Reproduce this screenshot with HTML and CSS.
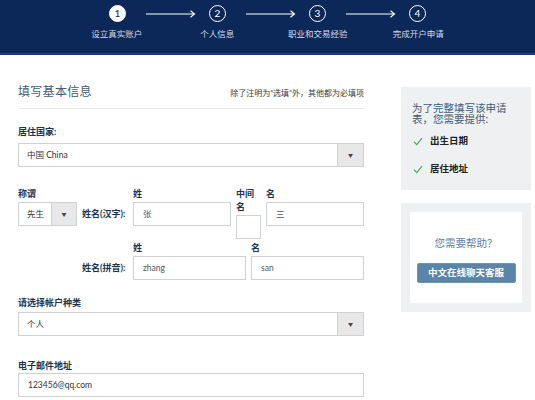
FILE: index.html
```html
<!DOCTYPE html>
<html lang="zh-CN">
<head>
<meta charset="utf-8">
<title>设立真实账户</title>
<link rel="stylesheet" href="styles.css">
</head>
<body>
<header class="topbar">
  <div class="steps">
    <span class="circle active">1</span>
    <svg class="arrow" width="50" height="10" viewBox="0 0 50 10"><path d="M0 5H48M44.5 1.8L48.5 5L44.5 8.2"/></svg>
    <span class="circle">2</span>
    <svg class="arrow" width="50" height="10" viewBox="0 0 50 10"><path d="M0 5H48M44.5 1.8L48.5 5L44.5 8.2"/></svg>
    <span class="circle">3</span>
    <svg class="arrow" width="50" height="10" viewBox="0 0 50 10"><path d="M0 5H48M44.5 1.8L48.5 5L44.5 8.2"/></svg>
    <span class="circle">4</span>
  </div>
  <div class="step-labels">
    <span>设立真实账户</span>
    <span>个人信息</span>
    <span>职业和交易经验</span>
    <span>完成开户申请</span>
  </div>
</header>

<div class="page">
  <main class="form">
    <div class="form-head">
      <h1>填写基本信息</h1>
      <p>除了注明为“选填”外，其他都为必填项</p>
    </div>

    <div class="field country">
      <div class="lbl">居住国家:</div>
      <div class="select"><span class="val">中国 China</span><span class="caret">▼</span></div>
    </div>

    <div class="name-row">
      <div class="col w-title">
        <div class="lbl">称谓</div>
        <div class="select"><span class="val">先生</span><span class="caret">▼</span></div>
      </div>
      <div class="row-lbl">姓名(汉字):</div>
      <div class="col w-sur">
        <div class="lbl">姓</div>
        <div class="input soft">张</div>
      </div>
      <div class="col w-mid">
        <div class="lbl">中间名</div>
        <div class="input"></div>
      </div>
      <div class="col w-given">
        <div class="lbl">名</div>
        <div class="input soft">三</div>
      </div>
    </div>

    <div class="name-row row2">
      <div class="w-title"></div>
      <div class="row-lbl">姓名(拼音):</div>
      <div class="col w-sur2">
        <div class="lbl">姓</div>
        <div class="input soft">zhang</div>
      </div>
      <div class="col w-given2">
        <div class="lbl">名</div>
        <div class="input soft">san</div>
      </div>
    </div>

    <div class="field acct">
      <div class="lbl">请选择帐户种类</div>
      <div class="select"><span class="val">个人</span><span class="caret">▼</span></div>
    </div>

    <div class="field email">
      <div class="lbl">电子邮件地址</div>
      <div class="input">123456@qq.com</div>
    </div>
  </main>

  <aside class="side">
    <div class="info-box">
      <p class="info-text">为了完整填写该申请表，您需要提供:</p>
      <ul class="checks">
        <li><svg class="tick" width="10" height="9" viewBox="0 0 10 9"><path d="M1 4.8L3.8 7.6L9 1.2"/></svg>出生日期</li>
        <li><svg class="tick" width="10" height="9" viewBox="0 0 10 9"><path d="M1 4.8L3.8 7.6L9 1.2"/></svg>居住地址</li>
      </ul>
    </div>
    <div class="help-box">
      <div class="help-inner">
        <p class="help-q">您需要帮助？</p>
        <button class="chat-btn">中文在线聊天客服</button>
      </div>
    </div>
  </aside>
</div>
</body>
</html>
```

FILE: styles.css
```css
* { box-sizing: border-box; }

html, body {
  margin: 0;
  padding: 0;
  background: #ffffff;
}

body {
  font-family: Lato, "Noto Sans CJK SC", sans-serif;
  color: #333;
  width: 535px;
  height: 400px;
  overflow: hidden;
}

/* ---------- header ---------- */
.topbar {
  background: #0c2859;
  height: 55px;
  border-bottom: 2px solid #1f3f73;
  padding-top: 5px;
}

.steps {
  display: flex;
  justify-content: center;
  align-items: center;
  height: 17px;
}

.circle {
  width: 17px;
  height: 17px;
  border-radius: 50%;
  border: 1.5px solid #ffffff;
  color: #ffffff;
  font-size: 10px;
  line-height: 14px;
  text-align: center;
  font-family: Lato, sans-serif;
}

.circle.active {
  background: #ffffff;
  color: #0c2859;
}

.arrow {
  margin: 0 13px 0 20px;
  fill: none;
  stroke: #ffffff;
  stroke-width: 1.1;
}

.step-labels {
  display: flex;
  justify-content: center;
  margin-top: 6px;
}

.step-labels span {
  width: 100.5px;
  text-align: center;
  font-size: 8.5px;
  line-height: 12px;
  color: #d3d9e6;
}

/* ---------- page ---------- */
.page {
  display: flex;
  gap: 37px;
  padding-left: 18px;
}

.form {
  width: 346px;
  flex: none;
}

.form-head {
  display: flex;
  justify-content: space-between;
  align-items: baseline;
  margin-top: 29px;
  padding-bottom: 8px;
  border-bottom: 1px solid #e6e8ea;
}

.form-head h1 {
  margin: 0;
  font-size: 12px;
  line-height: 16px;
  font-weight: normal;
  color: #3f5c79;
  letter-spacing: 0.3px;
}

.form-head p {
  margin: 0;
  font-size: 8px;
  line-height: 12px;
  color: #3a3a3a;
}

.lbl, .row-lbl {
  font-size: 9px;
  font-weight: bold;
  color: #1c3351;
  line-height: 13px;
}

.lbl { margin-bottom: 2px; }

.field.country { margin-top: 16px; }
.field.country .lbl { margin-bottom: 5px; }
.field.acct { margin-top: 16px; }
.field.acct .lbl { margin-bottom: 3px; }
.field.email { margin-top: 23px; }
.field.email .lbl { margin-bottom: 1px; }

.select, .input {
  height: 24px;
  border: 1px solid #cfd2d4;
  background: #ffffff;
  font-size: 8.5px;
  color: #333;
}

.select {
  display: flex;
  align-items: stretch;
}

.select .val {
  flex: 1;
  padding-left: 8px;
  line-height: 22px;
}

.select .caret {
  width: 26px;
  flex: none;
  background: #e8e8e8;
  border-left: 1px solid #cfd2d4;
  text-align: center;
  font-size: 5px;
  line-height: 22px;
  color: #444;
}

.input {
  padding-left: 9px;
  line-height: 22px;
}

.input.soft { color: #555; }

/* ---------- name rows ---------- */
.name-row {
  display: flex;
  align-items: flex-start;
  margin-top: 20px;
}

.name-row.row2 { margin-top: 2px; }

.col { display: flex; flex-direction: column; }

.w-title { width: 59px; flex: none; margin-right: 5px; }
.w-title .caret { width: 25px; }
.w-title .val { padding-left: 8px; }

.row-lbl {
  width: 48px;
  flex: none;
  margin-right: 3px;
  margin-top: 15px;
  line-height: 24px;
  white-space: nowrap;
}

.w-sur { width: 98px; margin-right: 5px; }
.w-mid { width: 25px; margin-right: 5px; }
.w-mid .input { height: 24px; }
.w-given { width: 98px; }

.w-sur2 { width: 113px; margin-right: 5px; }
.w-given2 { width: 113px; }

/* ---------- sidebar ---------- */
.side {
  width: 130px;
  flex: none;
  padding-top: 32px;
}

.info-box {
  background: #eef0f1;
  padding: 16px 20px 14px 11px;
}

.info-text {
  margin: 0;
  font-size: 10.5px;
  line-height: 11px;
  color: #3f5c79;
}

.checks {
  list-style: none;
  margin: 9px 0 0;
  padding: 0;
}

.checks li {
  display: flex;
  align-items: center;
  font-size: 9.5px;
  font-weight: bold;
  line-height: 14px;
  color: #222;
  white-space: nowrap;
}

.checks li + li { margin-top: 14px; }

.tick {
  margin-left: 1px;
  margin-right: 7px;
  fill: none;
  stroke: #4cb05a;
  stroke-width: 1.3;
}

.help-box {
  margin-top: 13px;
  background: #eef0f1;
  padding: 9px;
}

.help-inner {
  background: #ffffff;
  padding: 24px 6px 20px;
  display: flex;
  flex-direction: column;
  align-items: center;
}

.help-q {
  margin: 0;
  font-size: 10.5px;
  line-height: 14px;
  color: #5d7fa5;
}

.chat-btn {
  margin-top: 13px;
  width: 99px;
  height: 20px;
  padding: 0;
  border: 1px solid #6f93b3;
  border-radius: 2px;
  background: #5b84a9;
  color: #ffffff;
  font-family: Lato, "Noto Sans CJK SC", sans-serif;
  font-size: 9.5px;
  font-weight: bold;
  line-height: 18px;
}
```
